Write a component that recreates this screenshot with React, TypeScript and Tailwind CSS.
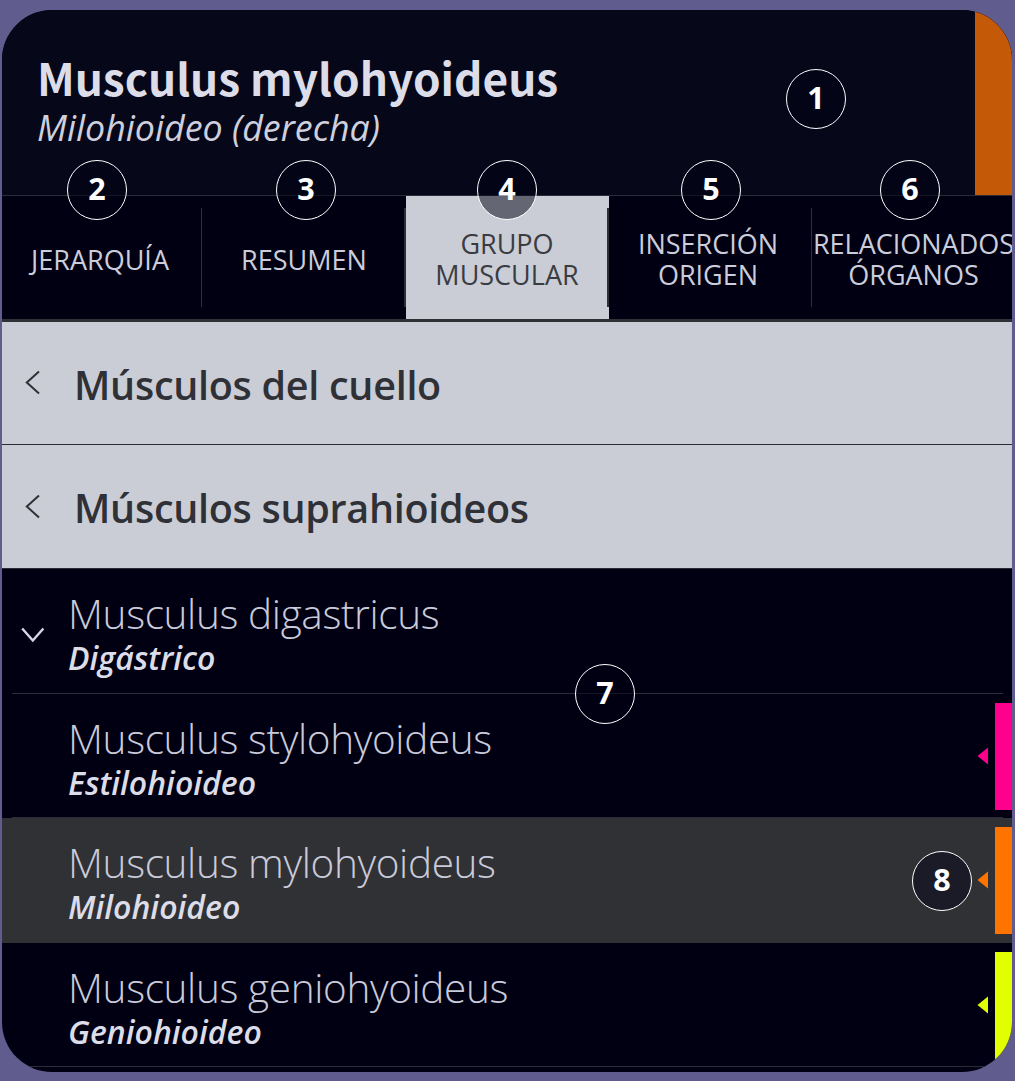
import clsx from 'clsx';

const tabs = [
  { lines: ['JERARQUÍA'], width: 'w-[200px]', nudge: 'pt-[3px] pr-[3px]' },
  { lines: ['RESUMEN'], width: 'w-[204px]', nudge: 'pt-[3px] pl-0.5' },
  { lines: ['GRUPO', 'MUSCULAR'], width: 'w-[203px]', nudge: 'pt-0.5 pl-px', active: true },
  { lines: ['INSERCIÓN', 'ORIGEN'], width: 'w-[203px]', nudge: 'pt-0.5 pr-1' },
  { lines: ['RELACIONADOS', 'ÓRGANOS'], width: 'w-[200px]', nudge: 'pt-0.5 pl-[3px]' },
];

const groups = [
  { label: 'Músculos del cuello', height: 'h-[123px]' },
  { label: 'Músculos suprahioideos', height: 'h-[124px]' },
];

const muscles = [
  { latin: 'Musculus digastricus', name: 'Digástrico', expandable: true },
  { latin: 'Musculus stylohyoideus', name: 'Estilohioideo', bar: 'bg-[#ff008c]', arrow: 'text-[#ff008c]' },
  { latin: 'Musculus mylohyoideus', name: 'Milohioideo', bar: 'bg-[#ff7300]', arrow: 'text-[#ff7300]', selected: true },
  { latin: 'Musculus geniohyoideus', name: 'Geniohioideo', bar: 'bg-[#e1ff00]', arrow: 'text-[#e1ff00]' },
];

const badges = [
  { n: 1, pos: 'left-[786px] top-[69px]' },
  { n: 2, pos: 'left-[67px] top-[160px]' },
  { n: 3, pos: 'left-[276px] top-[160px]' },
  { n: 4, pos: 'left-[477px] top-[160px]' },
  { n: 5, pos: 'left-[681px] top-[160px]' },
  { n: 6, pos: 'left-[880px] top-[160px]' },
  { n: 7, pos: 'left-[575px] top-[664px]' },
  { n: 8, pos: 'left-[912px] top-[851px]', solid: true },
];

function Header() {
  return (
    <header className="flex h-[186px] justify-between border-b border-[#2b2c38] bg-[#060819]">
      <div className="pt-[37px] pl-[35px] whitespace-nowrap text-[#dcdde9]">
        <h1 className="font-['Noto_Sans_CJK_SC',sans-serif] text-[44.2px] leading-[60px] font-bold">Musculus mylohyoideus</h1>
        <p className="text-[35.8px] leading-[41px] italic text-[#cfd0de]">Milohioideo (derecha)</p>
      </div>
      <div className="w-[37px] bg-[#c45a08]" />
    </header>
  );
}

function Tabs() {
  return (
    <nav className="flex h-[126px] border-b-3 border-[#2e3036]">
      {tabs.map((tab, i) => (
        <div
          key={tab.lines[0]}
          className={clsx(
            'flex shrink-0 items-center text-center text-[27px] leading-[31px] whitespace-nowrap',
            tab.width,
            tab.active ? 'bg-[#cacdd6] text-[#3a3c42]' : 'text-[#cccddb]'
          )}
        >
          <div className={clsx('flex w-0 flex-1 flex-col items-center', tab.nudge)}>
            {tab.lines.map((line) => (
              <span key={line}>{line}</span>
            ))}
          </div>
          {i < 4 && <div className={clsx('h-[99px] bg-[#2e3036]', i === 1 || i === 2 ? 'w-0.5' : 'w-px')} />}
        </div>
      ))}
    </nav>
  );
}

function GroupRow({ label, height }: { label: string; height: string }) {
  return (
    <div className={clsx('flex items-center border-b border-[#2a2d36] bg-[#cacdd6] text-[#2f3136]', height)}>
      <svg className="ml-[22px] h-[26px] w-[18px]" viewBox="0 0 18 26" fill="none" stroke="currentColor" strokeWidth="2">
        <path d="M15 1.5 2.8 12.5 15 23.5" />
      </svg>
      <span className="ml-[32px] pt-[5px] text-[39.5px] font-semibold tracking-[-0.28px]">{label}</span>
    </div>
  );
}

function MuscleRow({ muscle }: { muscle: (typeof muscles)[number] }) {
  return (
    <div className={clsx('flex h-[124.5px] shrink-0', muscle.selected && 'bg-[#303134]')}>
      <div className="flex w-[57px] items-center pl-[19px] text-[#d6d7e5]">
        {muscle.expandable && (
          <svg className="mt-2 h-4 w-6" viewBox="0 0 24 16" fill="none" stroke="currentColor" strokeWidth="2.4">
            <path d="M1.2 1.5 11.8 13.5 22.4 1.5" />
          </svg>
        )}
      </div>
      <div className={clsx('relative ml-[-47px] flex-1 pl-[56px] whitespace-nowrap', !muscle.selected && 'border-b border-[#2b2c38]')}>
        <p className="pt-[18.4px] text-[40.5px] leading-[54px] font-light tracking-[-0.36px] text-[#c9cada]">{muscle.latin}</p>
        <p className="text-[32px] leading-[34px] font-semibold italic text-[#dcdde9]">{muscle.name}</p>
      </div>
      <div className="-ml-9 flex w-[45px] items-center justify-end pt-px">
        {muscle.bar && (
          <>
            <svg className={clsx('mr-[7px] mb-px h-[18px] w-[11px]', muscle.arrow)} viewBox="0 0 11 18" fill="currentColor">
              <path d="M11 0.5v17L0.5 9z" />
            </svg>
            <div className={clsx('h-[107px] w-[17px]', muscle.bar)} />
          </>
        )}
      </div>
    </div>
  );
}

export default function App() {
  return (
    <main className="relative h-[1081px] w-[1015px] overflow-hidden bg-[#605c8d] pt-[10px] pr-[3px] pl-[2px] font-['Open_Sans',sans-serif]">
      <div className="flex h-[1062px] flex-col overflow-hidden rounded-[50px] bg-[#000012]">
        <Header />
        <Tabs />
        {groups.map((group) => (
          <GroupRow key={group.label} {...group} />
        ))}
        {muscles.map((muscle) => (
          <MuscleRow key={muscle.latin} muscle={muscle} />
        ))}
      </div>

      {/* Numbered callouts over the panel */}
      {badges.map((b) => (
        <div
          key={b.n}
          className={clsx(
            'absolute flex size-[60px] items-center justify-center rounded-full border-[1.5px] border-white pb-1 text-[30.5px] leading-none font-bold text-white',
            b.pos,
            b.solid ? 'bg-[#1a1b27]' : 'bg-[#000012]/50'
          )}
        >
          {b.n}
        </div>
      ))}
    </main>
  );
}
